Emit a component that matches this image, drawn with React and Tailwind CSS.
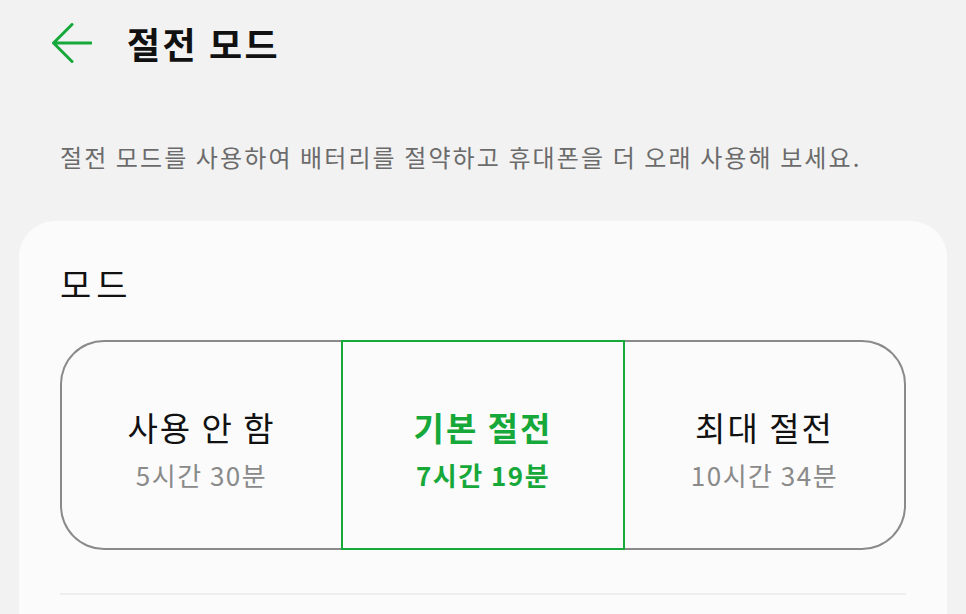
const font = { fontFamily: '"Noto Sans CJK KR", "Noto Sans", sans-serif' };

const modes = [
  { name: "사용 안 함", time: "5시간 30분" },
  { name: "기본 절전", time: "7시간 19분", active: true },
  { name: "최대 절전", time: "10시간 34분" },
];

const BackArrow = () => (
  <svg width="40" height="40" viewBox="0 0 40 40" fill="none">
    <path
      d="M2 20H39M20 1.5L1.5 20L20 38.5"
      stroke="#17a83a"
      strokeWidth="3"
      strokeLinecap="round"
      strokeLinejoin="round"
    />
  </svg>
);

export default function App() {
  return (
    <div className="w-[966px] h-[614px] overflow-hidden bg-[#f2f2f2]" style={font}>
      <header className="h-[86px] flex items-center pl-[52px] gap-[35px]">
        <BackArrow />
        <h1 className="text-[36px] leading-[40px] tracking-[2.5px] font-bold text-[#111111]">절전 모드</h1>
      </header>

      <p className="mt-[55px] pl-[60px] text-[24px] leading-[32px] tracking-[2.1px] text-[#6b6b6b]">
        절전 모드를 사용하여 배터리를 절약하고 휴대폰을 더 오래 사용해 보세요.
      </p>

      <section className="mt-[48px] mx-[19px] h-[400px] rounded-t-[36px] bg-[#fbfbfb] px-[41px] pt-[43px]">
        <h2 className="text-[34px] leading-[40px] tracking-[5px] text-[#111111]">모드</h2>

        <div className="mt-[36px] flex h-[210px]">
          {modes.map((m, i) => (
            <div
              key={m.name}
              className={
                i === 0
                  ? "flex-1 flex flex-col items-center justify-center pt-[8px] border-2 border-r-0 border-[#8a8a8a] rounded-l-[44px]"
                  : i === 1
                  ? "w-[284px] flex flex-col items-center justify-center pt-[8px] border-2 border-[#17a83a]"
                  : "flex-1 flex flex-col items-center justify-center pt-[8px] border-2 border-l-0 border-[#8a8a8a] rounded-r-[44px]"
              }
            >
              <span
                className={
                  m.active
                    ? "text-[33px] leading-[42px] tracking-[2px] font-bold text-[#17a83a]"
                    : "text-[33px] leading-[42px] tracking-[2px] text-[#111111]"
                }
              >
                {m.name}
              </span>
              <span
                className={
                  m.active
                    ? "mt-[10px] text-[26px] leading-[34px] tracking-[1.5px] font-bold text-[#17a83a]"
                    : "mt-[10px] text-[26px] leading-[34px] tracking-[1.5px] text-[#8a8a8a]"
                }
              >
                {m.time}
              </span>
            </div>
          ))}
        </div>

        <div className="mt-[43px] h-[2px] bg-[#eeeeee]" />
      </section>
    </div>
  );
}
